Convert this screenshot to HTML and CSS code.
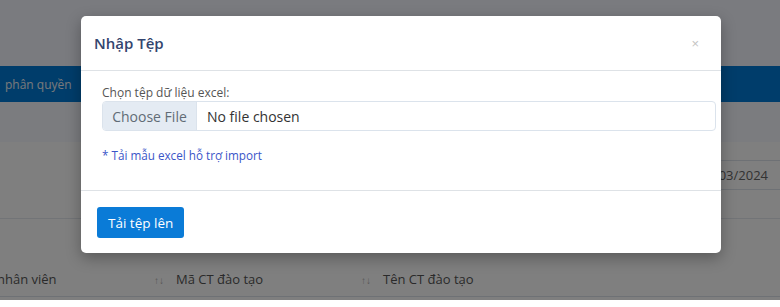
FILE: index.html
```html
<!DOCTYPE html>
<html lang="vi">
<head>
  <meta charset="UTF-8" />
  <meta name="viewport" content="width=device-width, initial-scale=1.0"/>
  <title>Nhập Tệp</title>
  <link rel="stylesheet" href="styles.css">
</head>
<body>
  <div class="page">
    <div class="topbar"></div>
    <nav class="navbar">
      <span class="nav-item">phân quyền</span>
    </nav>
    <div class="breadcrumb"></div>

    <div class="card">
      <div class="filters">
        <div class="date-input">01/03/2024</div>
      </div>
      <div class="table-head">
        <div class="th first">nhân viên <span class="sort">↑↓</span></div>
        <div class="th">Mã CT đào tạo <span class="sort">↑↓</span></div>
        <div class="th">Tên CT đào tạo</div>
      </div>
    </div>

    <div class="backdrop"></div>

    <div class="modal">
      <div class="modal-header">
        <h5>Nhập Tệp</h5>
        <button class="close" type="button">×</button>
      </div>
      <div class="modal-body">
        <label for="excelFile">Chọn tệp dữ liệu excel:</label>
        <input type="file" id="excelFile" class="file-input" />
        <a href="#" class="template-link">* Tải mẫu excel hỗ trợ import</a>
      </div>
      <div class="modal-footer">
        <button class="btn-upload" type="button">Tải tệp lên</button>
      </div>
    </div>
  </div>
</body>
</html>
```

FILE: styles.css
```css
body {
  margin: 0;
  font-family: 'Open Sans', 'Noto Sans', sans-serif;
  background: #fff;
  color: #333;
}

.page {
  position: relative;
  height: 300px;
  overflow: hidden;
}

.topbar {
  height: 66px;
  background: #f4f6fe;
}

.navbar {
  height: 36px;
  background: #007ad6;
  display: flex;
  align-items: center;
  padding-left: 5px;
}

.nav-item {
  color: #f0f2f6;
  font-size: 12px;
}

.breadcrumb {
  height: 40px;
  background: #f6f8fe;
}

.card {
  background: #fff;
}

.filters {
  height: 77px;
  border-bottom: 1px solid #e4e8ee;
  display: flex;
  justify-content: flex-end;
  padding-top: 18px;
  box-sizing: border-box;
}

.date-input {
  width: 120px;
  height: 30px;
  margin-right: -40px;
  border-top: 1px solid #dde3ea;
  border-bottom: 1px solid #dde3ea;
  box-sizing: border-box;
  display: flex;
  align-items: center;
  font-size: 13px;
  color: #666;
  text-indent: -1px;
}

.table-head {
  display: grid;
  grid-template-columns: 176px 207px 1fr;
  margin-top: 42px;
  height: 35px;
  align-items: center;
  border-bottom: 1px solid #dde3ea;
}

.th {
  display: flex;
  justify-content: space-between;
  align-items: center;
  padding-right: 12px;
  font-size: 13px;
  font-weight: 500;
  color: #555;
}

.th.first {
  margin-left: -3px;
}

.sort {
  font-size: 10px;
  color: #aaa;
  padding-top: 3px;
}

.backdrop {
  position: absolute;
  inset: 0;
  background: rgba(0, 0, 0, 0.5);
}

.modal {
  position: absolute;
  left: 81px;
  top: 16px;
  width: 640px;
  background: #fff;
  border-radius: 5px;
  box-shadow: 0 5px 15px rgba(0, 0, 0, 0.3);
}

.modal-header {
  height: 54px;
  display: flex;
  align-items: center;
  justify-content: space-between;
  padding: 0 22px 0 13px;
  border-bottom: 1px solid #dee2e6;
}

.modal-header h5 {
  margin: 0;
  font-size: 15px;
  font-weight: 600;
  color: #33456e;
}

.close {
  background: none;
  border: none;
  padding: 0;
  font-size: 13px;
  color: #c4c4c4;
  cursor: pointer;
}

.modal-body {
  display: flex;
  flex-direction: column;
  align-items: flex-start;
  padding: 13px 5px 27px 21px;
  border-bottom: 1px solid #dee2e6;
}

.modal-body label {
  font-size: 12px;
  line-height: 17px;
  color: #555;
}

.file-input {
  width: 100%;
  height: 30px;
  padding: 0;
  border: 1px solid #dbe3ec;
  border-radius: 4px;
  box-sizing: border-box;
  font-family: inherit;
  font-size: 14px;
  color: #333;
  margin-bottom: 16px;
}

.file-input::file-selector-button {
  height: 100%;
  width: 94px;
  margin: 0 10px 0 0;
  border: none;
  border-right: 1px solid #dbe3ec;
  background: #e4ebf3;
  color: #616b76;
  font-family: inherit;
  font-size: 14px;
}

.template-link {
  font-size: 11.7px;
  line-height: 16px;
  color: #3a55c8;
  text-decoration: none;
}

.modal-footer {
  padding: 16px 16px 15px;
}

.btn-upload {
  height: 31px;
  padding: 0 11px;
  background: #0a7bd7;
  color: #fff;
  border: none;
  border-radius: 3px;
  font-family: inherit;
  font-size: 13.5px;
  cursor: pointer;
}
```
